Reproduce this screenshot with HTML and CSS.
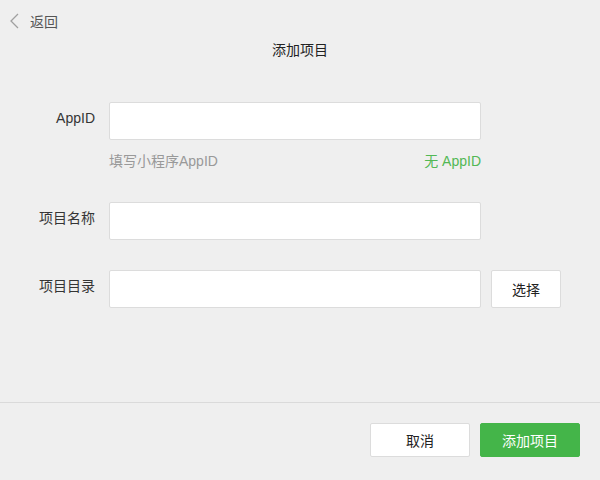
FILE: index.html
```html
<!DOCTYPE html>
<html lang="zh-CN">
<head>
    <meta charset="UTF-8">
    <meta name="viewport" content="width=device-width, initial-scale=1.0">
    <title>添加项目</title>
    <link rel="stylesheet" href="styles.css">
</head>
<body>

<div class="back">
    <svg class="back-icon" width="9" height="16" viewBox="0 0 9 16">
        <path d="M8 1 L1 8 L8 15" fill="none" stroke="#a0a0a0" stroke-width="1.3"/>
    </svg>
    <span>返回</span>
</div>
<div class="title">添加项目</div>

<div class="form">
    <div class="row">
        <label class="label">AppID</label>
        <div class="field">
            <input type="text" class="input">
            <div class="hint">
                <span>填写小程序AppID</span>
                <a class="link">无 AppID</a>
            </div>
        </div>
    </div>
    <div class="row">
        <label class="label">项目名称</label>
        <div class="field">
            <input type="text" class="input">
        </div>
    </div>
    <div class="row">
        <label class="label">项目目录</label>
        <div class="field">
            <input type="text" class="input">
        </div>
        <button class="btn btn-pick">选择</button>
    </div>
</div>

<div class="footer">
    <button class="btn btn-cancel">取消</button>
    <button class="btn btn-primary">添加项目</button>
</div>

</body>
</html>
```

FILE: styles.css
```css
html, body {
    margin: 0;
    padding: 0;
    height: 100%;
}
body {
    display: flex;
    flex-direction: column;
    background: #efefef;
    color: #353535;
    font-family: "Liberation Sans", "Noto Sans CJK SC", sans-serif;
    font-size: 14px;
}
.back {
    height: 42px;
    display: flex;
    align-items: center;
    padding-left: 10px;
    color: #555;
}
.back-icon {
    margin-right: 11px;
}
.title {
    line-height: 16px;
    text-align: center;
    color: #222;
}
.form {
    padding-top: 44px;
}
.row {
    display: flex;
    align-items: flex-start;
    margin-bottom: 30px;
}
.label {
    width: 109px;
    padding-top: 6px;
    padding-right: 14px;
    box-sizing: border-box;
    line-height: 20px;
    text-align: right;
    color: #353535;
}
.field {
    width: 372px;
}
.input {
    display: block;
    width: 100%;
    height: 38px;
    box-sizing: border-box;
    border: 1px solid #dcdcdc;
    border-radius: 2px;
    background: #fff;
    outline: none;
    font: inherit;
    padding: 0 10px;
}
.hint {
    display: flex;
    justify-content: space-between;
    margin-top: 10px;
    line-height: 22px;
    color: #999;
}
.link {
    color: #52b854;
    cursor: pointer;
}
.btn {
    box-sizing: border-box;
    border: 1px solid #dcdcdc;
    border-radius: 2px;
    background: #fff;
    font: inherit;
    color: #222;
    cursor: pointer;
}
.btn-pick {
    width: 70px;
    height: 38px;
    margin-left: 10px;
}
.footer {
    margin-top: auto;
    height: 78px;
    box-sizing: border-box;
    border-top: 1px solid #dadada;
    display: flex;
    justify-content: flex-end;
    align-items: flex-start;
    gap: 10px;
    padding: 20px 20px 0 0;
}
.btn-cancel,
.btn-primary {
    width: 100px;
    height: 34px;
}
.btn-primary {
    background: #44b549;
    border-color: #44b549;
    color: #fff;
}
```
